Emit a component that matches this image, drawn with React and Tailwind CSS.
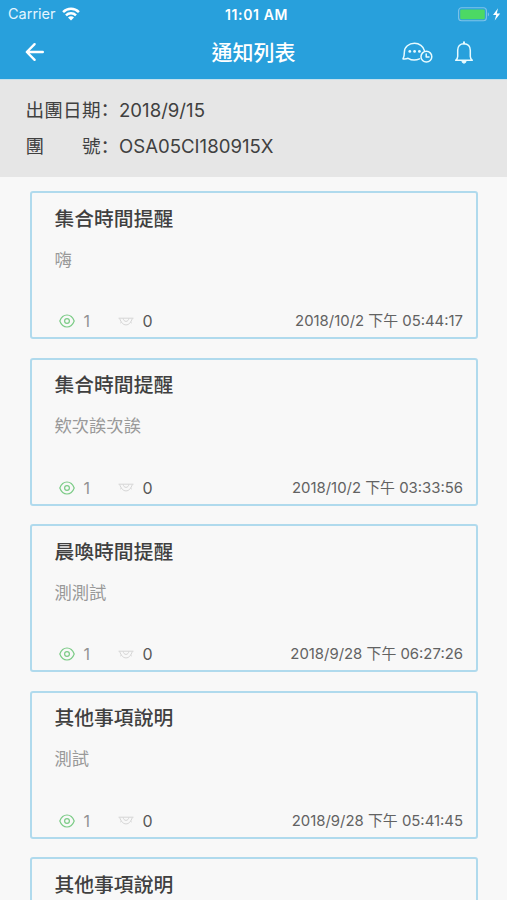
const NOTICES = [
    { id: 1, title: '集合時間提醒', body: '嗨', read: 1, unread: 0, time: '2018/10/2 下午 05:44:17' },
    { id: 2, title: '集合時間提醒', body: '欸次誒次誒', read: 1, unread: 0, time: '2018/10/2 下午 03:33:56' },
    { id: 3, title: '晨喚時間提醒', body: '測測試', read: 1, unread: 0, time: '2018/9/28 下午 06:27:26' },
    { id: 4, title: '其他事項說明', body: '測試', read: 1, unread: 0, time: '2018/9/28 下午 05:41:45' },
    { id: 5, title: '其他事項說明' },
];

function WifiIcon() {
    return (
        <svg width="18" height="14" viewBox="0 0 18 14" fill="none" stroke="currentColor" strokeWidth="2.5">
            <path d="M1.1 5.1a11.2 11.2 0 0 1 15.8 0" />
            <path d="M4 8.4a7.1 7.1 0 0 1 10 0" />
            <path d="M9 13.5 6 10.5a4.2 4.2 0 0 1 6 0Z" fill="currentColor" stroke="none" />
        </svg>
    );
}

function BatteryIcon() {
    return (
        <svg width="43" height="15" viewBox="0 0 43 15">
            <rect x="0.6" y="0.8" width="27.8" height="13" rx="3" fill="none" stroke="#7fc3e9" strokeWidth="1.1" />
            <rect x="2.2" y="2.5" width="24.6" height="9.7" rx="1.2" fill="#4cd964" />
            <path d="M29.8 5.2c1.6.7 1.6 3.6 0 4.3Z" fill="#7fc3e9" />
            <path d="M40 1.2 35 8h3.2l-1.5 5.6 5.5-7.2h-3.4Z" fill="#fff" />
        </svg>
    );
}

function BackIcon() {
    return (
        <svg className="-mt-0.5" width="20" height="20" viewBox="0 0 20 20" fill="none" stroke="currentColor" strokeWidth="2.4" strokeLinecap="round" strokeLinejoin="round">
            <path d="M17.8 10H2M9.6 2.2 1.8 10l7.8 7.8" />
        </svg>
    );
}

function ChatClockIcon() {
    return (
        <svg width="31" height="22" viewBox="0 0 31 22" fill="none" stroke="currentColor" strokeWidth="1.5" strokeLinecap="round" strokeLinejoin="round">
            <path d="M22.3 8.4C21.4 4.2 17.3 1.3 12.5 1.3 6.9 1.3 2.4 5.1 2.4 9.8c0 2-.1 4.5-1.4 7.1 1.9.2 3.6 0 5.1-.6 3 1.8 7.9 2.2 11.4.6" />
            <circle cx="24.4" cy="14.7" r="5.4" />
            <path d="M24.2 11.9v3.2h2.8" />
            <g fill="currentColor" stroke="none">
                <circle cx="7.8" cy="9.4" r="1.4" />
                <circle cx="12.6" cy="9.4" r="1.4" />
                <circle cx="17.4" cy="9.4" r="1.4" />
            </g>
        </svg>
    );
}

function BellIcon() {
    return (
        <svg width="20" height="24" viewBox="0 0 20 24" fill="none" stroke="currentColor" strokeWidth="1.5" strokeLinecap="round" strokeLinejoin="round">
            <path d="M10 2.7c-4 0-6.3 2.8-6.3 6.6v6.2c0 1.7-.8 2.7-2 3.8h16.6c-1.2-1.1-2-2.1-2-3.8V9.3c0-3.8-2.3-6.6-6.3-6.6Z" />
            <path d="M10 2.5V1.2" strokeWidth="2" />
            <path d="M7.9 20.1a2.1 2.1 0 0 0 4.2 0Z" fill="currentColor" strokeWidth="1" />
        </svg>
    );
}

function EyeIcon() {
    return (
        <svg width="16" height="14" viewBox="0 0 16 14" fill="none" stroke="#7bcb86" strokeWidth="1.2">
            <path d="M.8 7C2.2 3.2 5 1 8 1s5.8 2.2 7.2 6C13.8 10.8 11 13 8 13S2.2 10.8.8 7Z" />
            <circle cx="8" cy="7" r="2.4" />
        </svg>
    );
}

function UnreadIcon() {
    return (
        <svg width="16" height="9" viewBox="0 0 16 9" fill="none" stroke="#d6d6d6" strokeWidth="1">
            <path d="M.5 1.2h15M1.7 1.5C3 5.6 5.2 7.9 8 7.9s5-2.3 6.3-6.4" />
            <path d="M5.2 1.4c.2 1.8 1.3 3 2.8 3s2.6-1.2 2.8-3M3.6 5 2.2 6.1M12.4 5l1.4 1.1" />
        </svg>
    );
}

function InfoRow({ label, value }) {
    return (
        <div className="flex h-[36.5px] items-center">
            <span className="flex w-[75px] justify-between">
                {[...label].map((c) => <span key={c}>{c}</span>)}
            </span>
            <span lang="zh-Hans" className="w-[18.5px] pb-[5px] font-['Noto_Sans_CJK_SC',sans-serif]">：</span>
            <span>{value}</span>
        </div>
    );
}

function NoticeCard({ notice }) {
    return (
        <div className="h-[148px] shrink-0 rounded-[3px] border-2 border-[#b0daed] bg-[#f8f8f8] pl-[23px] pr-[13px] flex flex-col">
            <h2 className="mt-[11.6px] text-[19.8px] leading-7 font-medium text-[#404040]">{notice.title}</h2>
            {notice.time && (
                <>
                    <p className="mt-[15px] h-6 text-[17.3px] leading-6 text-[#999]">{notice.body}</p>
                    <div className="mt-[37.8px] flex items-center leading-5">
                        <span className="ml-1 flex"><EyeIcon /></span>
                        <span className="ml-[9px] w-[34px] text-base text-[#929292]">{notice.read}</span>
                        <span className="flex"><UnreadIcon /></span>
                        <span className="ml-[9px] text-base text-[#585858]">{notice.unread}</span>
                        <span className="ml-auto text-[14.9px] text-[#626262] whitespace-nowrap">{notice.time}</span>
                    </div>
                </>
            )}
        </div>
    );
}

export default function App() {
    return (
        <div className="h-[900px] overflow-hidden bg-[#f8f8f8] font-['Inter','Noto_Sans_CJK_TC',sans-serif] flex flex-col">
            <header className="h-[79px] shrink-0 bg-[#28a0dc] text-white">
                <div className="h-7 grid grid-cols-3 items-center pl-2 pr-1.5">
                    <div className="flex items-center gap-1.5 text-[14.5px] text-[#e4f5ff]">
                        Carrier
                        <span className="text-white"><WifiIcon /></span>
                    </div>
                    <div className="pl-1 text-center text-[14px] tracking-[0.6px] font-semibold">11:01 AM</div>
                    <div className="flex justify-end"><BatteryIcon /></div>
                </div>
                <div className="h-[49px] grid grid-cols-3 items-center pl-[25px] pr-[33px]">
                    <BackIcon />
                    <h1 className="text-center text-[21px] font-medium whitespace-nowrap pl-2">通知列表</h1>
                    <div className="flex items-center justify-end gap-[21px] text-[#e8fbff]">
                        <ChatClockIcon />
                        <BellIcon />
                    </div>
                </div>
            </header>

            <section className="h-[98px] shrink-0 border-t border-[#c4e1ed] bg-[#e6e6e6] pl-[25.5px] pt-[12.6px] text-[18.6px] text-[#404040]">
                <InfoRow label="出團日期" value="2018/9/15" />
                <InfoRow label="團號" value="OSA05CI180915X" />
            </section>

            <main className="flex flex-col gap-[18.5px] pl-[29.5px] pr-[29px] pt-3.5">
                {NOTICES.map((n) => <NoticeCard key={n.id} notice={n} />)}
            </main>
        </div>
    );
}
